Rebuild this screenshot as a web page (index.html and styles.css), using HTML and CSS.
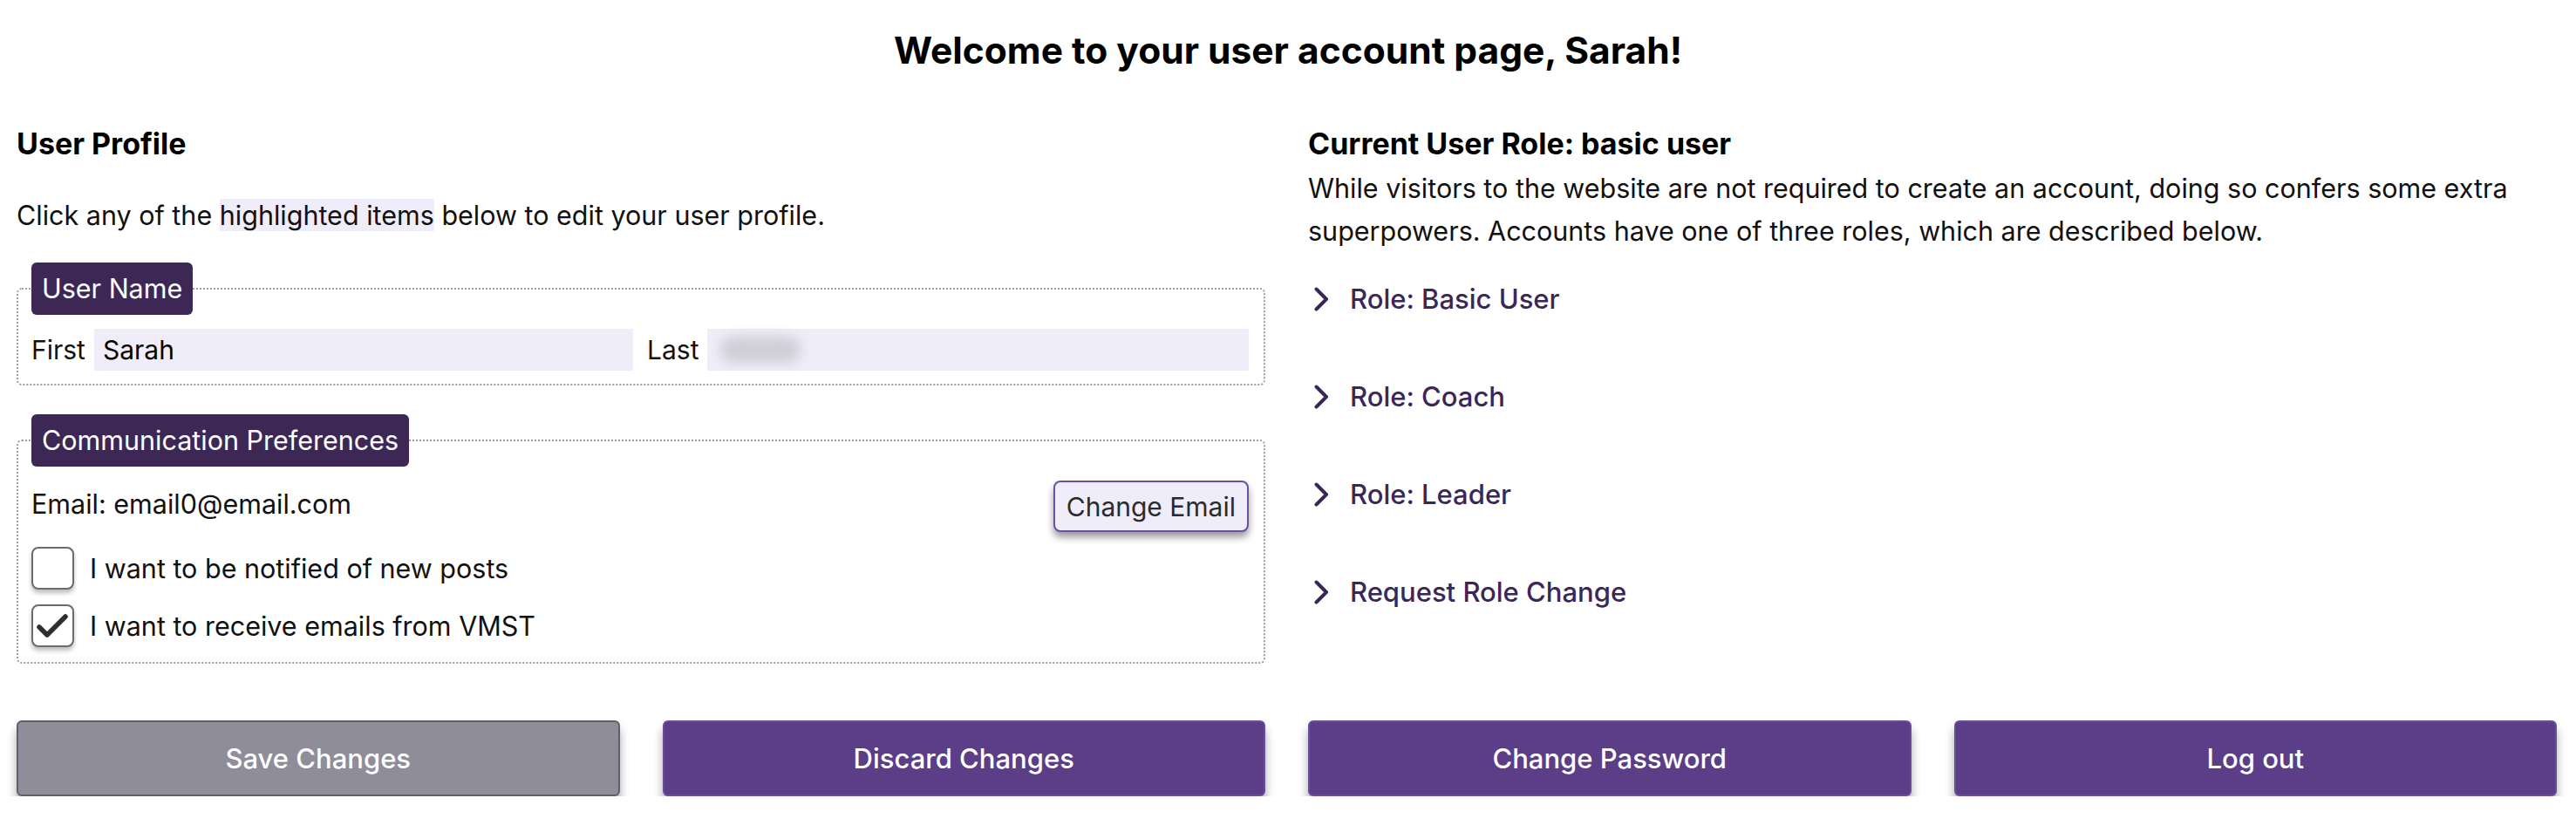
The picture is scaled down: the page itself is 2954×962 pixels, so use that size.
FILE: index.html
```html
<!DOCTYPE html>
<html lang="en">
<head>
<meta charset="utf-8">
<title>User Account</title>
<link rel="stylesheet" href="styles.css">
</head>
<body>
<h1 class="title">Welcome to your user account page, Sarah!</h1>
<main class="layout">
  <section class="profile">
    <h2 class="heading">User Profile</h2>
    <p class="intro">Click any of the <span class="hl">highlighted items</span> below to edit your user profile.</p>
    <fieldset class="group">
      <legend class="group-legend">User Name</legend>
      <div class="name-row">
        <div class="name-field"><span class="name-label">First</span><span class="field-input">Sarah</span></div>
        <div class="name-field"><span class="name-label">Last</span><span class="field-input"><span class="redacted"></span></span></div>
      </div>
    </fieldset>
    <fieldset class="group group-comm">
      <legend class="group-legend">Communication Preferences</legend>
      <div class="email-row">
        <span class="email-text">Email: email0@email.com</span>
        <button class="btn-light" type="button">Change Email</button>
      </div>
      <div class="check-row"><span class="checkbox"></span><span>I want to be notified of new posts</span></div>
      <div class="check-row"><span class="checkbox"><svg class="check-icon" viewBox="0 0 45 45" width="45" height="45"><path d="M7 24 L16 33 L37 12" fill="none" stroke="#2f2f2f" stroke-width="5.5" stroke-linecap="round" stroke-linejoin="round"/></svg></span><span>I want to receive emails from VMST</span></div>
    </fieldset>
  </section>
  <section class="roles">
    <h2 class="heading">Current User Role: basic user</h2>
    <p class="roles-text">While visitors to the website are not required to create an account, doing so confers some extra superpowers. Accounts have one of three roles, which are described below.</p>
    <ul class="role-list">
      <li class="role-item"><svg class="chevron" viewBox="0 0 17 28" width="17" height="28"><path d="M2.5 2.5 L14 14 L2.5 25.5" fill="none" stroke="#3b2757" stroke-width="4" stroke-linecap="round" stroke-linejoin="round"/></svg><span>Role: Basic User</span></li>
      <li class="role-item"><svg class="chevron" viewBox="0 0 17 28" width="17" height="28"><path d="M2.5 2.5 L14 14 L2.5 25.5" fill="none" stroke="#3b2757" stroke-width="4" stroke-linecap="round" stroke-linejoin="round"/></svg><span>Role: Coach</span></li>
      <li class="role-item"><svg class="chevron" viewBox="0 0 17 28" width="17" height="28"><path d="M2.5 2.5 L14 14 L2.5 25.5" fill="none" stroke="#3b2757" stroke-width="4" stroke-linecap="round" stroke-linejoin="round"/></svg><span>Role: Leader</span></li>
      <li class="role-item"><svg class="chevron" viewBox="0 0 17 28" width="17" height="28"><path d="M2.5 2.5 L14 14 L2.5 25.5" fill="none" stroke="#3b2757" stroke-width="4" stroke-linecap="round" stroke-linejoin="round"/></svg><span>Request Role Change</span></li>
    </ul>
  </section>
  <div class="actions">
    <button class="btn btn-gray" type="button">Save Changes</button>
    <button class="btn btn-purple" type="button">Discard Changes</button>
  </div>
  <div class="actions">
    <button class="btn btn-purple" type="button">Change Password</button>
    <button class="btn btn-purple" type="button">Log out</button>
  </div>
</main>
</body>
</html>
```
FILE: styles.css
```css
* { box-sizing: border-box; }
body {
  margin: 0;
  font-family: Inter, "Noto Sans", sans-serif;
  color: #111;
  background: #fff;
}
.title {
  margin: 0;
  padding-top: 34px;
  font-size: 42.5px;
  line-height: 48px;
  font-weight: 700;
  text-align: center;
  color: #000;
}
.layout {
  display: grid;
  grid-template-columns: 1fr 1fr;
  column-gap: 49px;
  row-gap: 65px;
  padding: 65px 22px 0 19px;
}
.heading {
  margin: 0;
  font-size: 34px;
  line-height: 36px;
  font-weight: 700;
  color: #000;
}
.intro {
  margin: 39px 0 0;
  font-size: 30.5px;
  line-height: 49px;
}
.hl { background: #efedf9; }
.group {
  margin: 30px 0 0;
  border: 2px dotted #9c9c9c;
  border-radius: 6px;
  padding: 0 17px 15px 15px;
  min-width: 0;
}
.group-comm { margin-top: 33px; padding-bottom: 17px; }
.group-legend {
  background: #3d2855;
  color: #fff;
  padding: 0 12px;
  border-radius: 6px;
  font-size: 30.5px;
  line-height: 60px;
}
.name-row {
  display: grid;
  grid-template-columns: 1fr 1fr;
  column-gap: 16px;
  margin-top: 16px;
  font-size: 30px;
}
.name-field { display: flex; align-items: center; gap: 10px; }
.field-input {
  flex: 1;
  height: 48px;
  background: #efedf9;
  display: flex;
  align-items: center;
  padding: 0 10px;
  color: #000;
}
.redacted {
  width: 92px;
  height: 30px;
  background: #cfced6;
  border-radius: 15px;
  filter: blur(7px);
  margin-left: 5px;
}
.email-row {
  display: flex;
  justify-content: space-between;
  align-items: center;
  margin-top: 16px;
  font-size: 30.5px;
}
.email-text { margin-bottom: 6px; }
.btn-light {
  font-family: inherit;
  font-size: 30px;
  color: #2b2b2b;
  background: #efedf9;
  border: 2px solid #6c50a5;
  border-radius: 8px;
  padding: 0 13px;
  height: 59px;
  box-shadow: 0 6px 9px rgba(0, 0, 0, 0.4);
}
.check-row {
  display: flex;
  align-items: center;
  gap: 18px;
  margin-top: 17px;
  font-size: 30.5px;
}
.checkbox {
  flex: none;
  width: 49px;
  height: 49px;
  border: 2px solid #6b6b6b;
  border-radius: 8px;
  background: #fff;
  box-shadow: 0 4px 5px rgba(0, 0, 0, 0.25);
  display: flex;
  align-items: center;
  justify-content: center;
}
.check-icon { display: block; }
.roles-text {
  margin: 8px 0 0;
  font-size: 30.5px;
  line-height: 49px;
}
.role-list {
  list-style: none;
  margin: 34px 0 0;
  padding: 0;
  display: flex;
  flex-direction: column;
  gap: 72px;
}
.role-item {
  display: flex;
  align-items: center;
  gap: 24px;
  padding-left: 7px;
  font-size: 31px;
  line-height: 40px;
  font-weight: 500;
  color: #3b2757;
}
.chevron { display: block; flex: none; }
.actions {
  display: grid;
  grid-template-columns: 1fr 1fr;
  gap: 49px;
}
.btn {
  height: 87px;
  border-radius: 6px;
  font-family: inherit;
  font-size: 31px;
  font-weight: 500;
  color: #fff;
  border: 2px solid;
  box-shadow: 0 9px 11px rgba(0, 0, 0, 0.35);
}
.btn-gray { background: #8e8d99; border-color: #5f5e69; }
.btn-purple { background: #5c3d88; border-color: #6a4c9c; }
```
